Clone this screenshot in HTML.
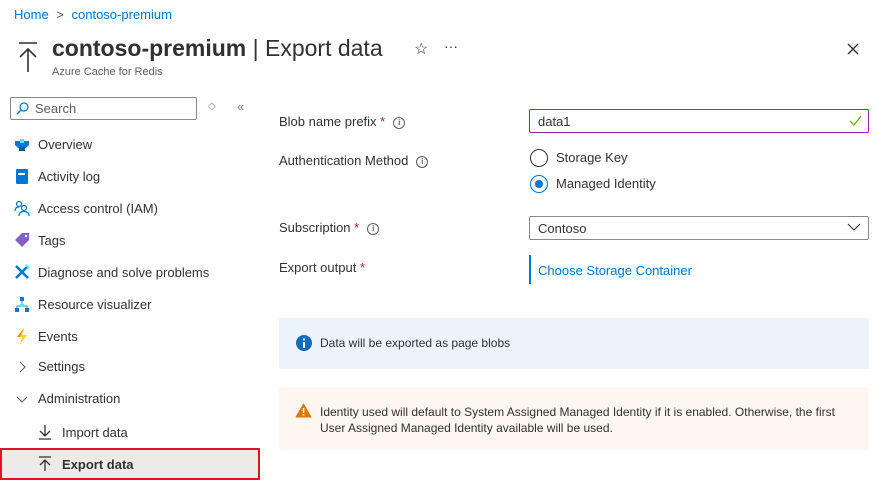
<!DOCTYPE html>
<html><head><meta charset="utf-8"><style>
*{margin:0;padding:0;box-sizing:border-box}
body{width:878px;height:487px;background:#fff;font-family:"Liberation Sans",sans-serif;color:#323130;position:relative;overflow:hidden;font-size:13px}
.a{position:absolute;white-space:nowrap}
.nav{position:absolute;left:38px;font-size:13px;line-height:16px}
.ic{position:absolute;left:14px;width:16px;height:16px}
.lbl{position:absolute;left:279px;font-size:13px;line-height:16px}
.req{color:#a4262c}
.info{display:inline-block;width:12px;height:12px;border:1px solid #605e5c;border-radius:50%;font-size:8px;line-height:10px;text-align:center;color:#605e5c;vertical-align:middle;margin-left:8px;font-weight:bold}
</style></head><body>
<div class="a" style="left:14px;top:7px;color:#0078d4;font-size:13px">Home <span style="color:#605e5c;margin:0 4px">&gt;</span> contoso-premium</div>
<svg class="a" style="left:17px;top:41px" width="22" height="32" viewBox="0 0 22 32"><path d="M2 2H20M11 8V31M3 16L11 8L19 16" stroke="#323130" stroke-width="1.6" fill="none"/></svg>
<div class="a" style="left:52px;top:34px;font-size:23px;line-height:28px;color:#323130"><b>contoso-premium</b> | Export data</div>
<div class="a" style="left:414px;top:39px;font-size:16px;color:#323130">☆</div>
<div class="a" style="left:444px;top:38px;font-size:14px;color:#323130">···</div>
<svg class="a" style="left:847px;top:43px" width="12" height="12"><path d="M1 1L11 11M11 1L1 11" stroke="#323130" stroke-width="1.3"/></svg>
<div class="a" style="left:52px;top:66px;font-size:11px;color:#605e5c">Azure Cache for Redis</div>
<div class="a" style="left:10px;top:97px;width:187px;height:23px;border:1px solid #8a8886;border-radius:2px"></div>
<svg class="a" style="left:16px;top:102px" width="13" height="13"><circle cx="8" cy="5" r="4" stroke="#0078d4" fill="none" stroke-width="1.2"/><path d="M5 8L1 12" stroke="#0078d4" stroke-width="1.3"/></svg>
<div class="a" style="left:35px;top:101px;color:#605e5c;font-size:13px">Search</div>
<div class="a" style="left:208px;top:101px;color:#8a8886;font-size:10px">◇</div>
<div class="a" style="left:237px;top:99px;color:#8a8886;font-size:13px">«</div>

<svg class="ic" style="top:137px" viewBox="0 0 16 16"><path d="M1 4h14v4l-3 3H4L1 8z" fill="#0078d4"/><rect x="5" y="10" width="6" height="4" fill="#005ba1"/><rect x="6" y="2" width="4" height="4" fill="#50e6ff"/></svg>
<div class="nav" style="top:137px">Overview</div>
<svg class="ic" style="top:168px" viewBox="0 0 16 16"><rect x="2" y="1" width="12" height="15" rx="1" fill="#0078d4"/><rect x="4" y="5" width="7" height="2" fill="#fff"/></svg>
<div class="nav" style="top:169px">Activity log</div>
<svg class="ic" style="top:200px" viewBox="0 0 16 16" fill="none" stroke="#0078d4" stroke-width="1.2"><circle cx="5" cy="4" r="2.5"/><path d="M1 11c0-3 2-4 4-4"/><circle cx="10" cy="8" r="2.5"/><path d="M5 16c0-3 2-4.5 5-4.5s5 1.5 5 4.5"/></svg>
<div class="nav" style="top:201px">Access control (IAM)</div>
<svg class="ic" style="top:232px" viewBox="0 0 16 16"><path d="M8 1h7v7l-7 7-7-7z" fill="#8661c5"/><circle cx="12" cy="4" r="1.2" fill="#fff"/></svg>
<div class="nav" style="top:233px">Tags</div>
<svg class="ic" style="top:264px" viewBox="0 0 16 16"><path d="M2 2L14 14M14 2L2 14" stroke="#0078d4" stroke-width="2.6"/><path d="M12 1l3 3" stroke="#50e6ff" stroke-width="2"/></svg>
<div class="nav" style="top:265px">Diagnose and solve problems</div>
<svg class="ic" style="top:296px" viewBox="0 0 16 16"><path d="M8 4V9M3 13V10H13V13" stroke="#7a7574" fill="none"/><rect x="6" y="1" width="4" height="4" fill="#0078d4"/><rect x="1" y="12" width="4" height="4" fill="#0078d4"/><rect x="11" y="12" width="4" height="4" fill="#0078d4"/><rect x="6" y="8" width="4" height="3" fill="#50e6ff"/></svg>
<div class="nav" style="top:297px">Resource visualizer</div>
<svg class="ic" style="top:328px" viewBox="0 0 16 16"><path d="M10 0L3 9h5l-2 7 7-9H8z" fill="#fcd116"/><path d="M10 0L3 9h3z" fill="#ff8c00"/></svg>
<div class="nav" style="top:329px">Events</div>
<svg class="ic" style="top:359px" viewBox="0 0 16 16"><path d="M6 3l5 5-5 5" stroke="#605e5c" fill="none" stroke-width="1.1"/></svg>
<div class="nav" style="top:359px">Settings</div>
<svg class="ic" style="top:391px" viewBox="0 0 16 16"><path d="M3 6l5 5 5-5" stroke="#605e5c" fill="none" stroke-width="1.1"/></svg>
<div class="nav" style="top:391px">Administration</div>
<svg class="a" style="left:38px;top:424px" width="14" height="16"><path d="M7 1V12M2 7L7 12L12 7M1 15H13" stroke="#323130" stroke-width="1.3" fill="none"/></svg>
<div class="nav" style="top:425px;left:62px">Import data</div>
<div class="a" style="left:0;top:448px;width:260px;height:32px;background:#edebe9;border:2px solid #e81123"></div>
<svg class="a" style="left:38px;top:456px" width="14" height="16"><path d="M1 1H13M7 4V15M2 9L7 4L12 9" stroke="#323130" stroke-width="1.3" fill="none"/></svg>
<div class="nav" style="top:457px;left:62px;font-weight:bold">Export data</div>

<div class="lbl" style="top:114px">Blob name prefix <span class="req">*</span><span class="info">i</span></div>
<div class="a" style="left:529px;top:109px;width:340px;height:24px;border:1px solid #8a2da5;border-radius:2px;padding:4px 8px;font-size:13px">data1</div>
<svg class="a" style="left:849px;top:115px" width="13" height="11"><path d="M1 6L5 10L12 1" stroke="#6bb700" stroke-width="1.3" fill="none"/></svg>
<div class="lbl" style="top:153px">Authentication Method<span class="info">i</span></div>
<div class="a" style="left:530px;top:149px;width:18px;height:18px;border:1px solid #323130;border-radius:50%"></div>
<div class="a" style="left:556px;top:150px;font-size:13px">Storage Key</div>
<div class="a" style="left:530px;top:175px;width:18px;height:18px;border:1px solid #0078d4;border-radius:50%"></div>
<div class="a" style="left:535px;top:180px;width:8px;height:8px;background:#0078d4;border-radius:50%"></div>
<div class="a" style="left:556px;top:176px;font-size:13px">Managed Identity</div>
<div class="lbl" style="top:220px">Subscription <span class="req">*</span><span class="info">i</span></div>
<div class="a" style="left:529px;top:216px;width:340px;height:24px;border:1px solid #8a8886;border-radius:2px;padding:4px 8px;font-size:13px">Contoso</div>
<svg class="a" style="left:847px;top:223px" width="14" height="9"><path d="M1 1L7 7L13 1" stroke="#323130" stroke-width="1.1" fill="none"/></svg>
<div class="lbl" style="top:260px">Export output <span class="req">*</span></div>
<div class="a" style="left:529px;top:255px;width:2px;height:29px;background:#0078d4"></div>
<div class="a" style="left:538px;top:263px;color:#0078d4;font-size:13px">Choose Storage Container</div>

<div class="a" style="left:279px;top:318px;width:590px;height:51px;background:#ebf3fc;border-radius:2px"></div>
<svg class="a" style="left:296px;top:335px" width="16" height="16"><circle cx="8" cy="8" r="8" fill="#0f6cbd"/><rect x="7" y="7" width="2" height="6" fill="#fff"/><circle cx="8" cy="4.5" r="1.2" fill="#fff"/></svg>
<div class="a" style="left:320px;top:336px;font-size:12px">Data will be exported as page blobs</div>
<div class="a" style="left:279px;top:387px;width:590px;height:63px;background:#fdf6f1;border-radius:2px"></div>
<svg class="a" style="left:295px;top:403px" width="17" height="15"><path d="M8.5 1L16 14H1z" fill="#da7b0f" stroke="#da7b0f" stroke-linejoin="round"/><rect x="7.8" y="5" width="1.5" height="5" fill="#fff"/><rect x="7.8" y="11" width="1.5" height="1.5" fill="#fff"/></svg>
<div class="a" style="left:320px;top:404px;font-size:12px;line-height:16px;white-space:normal;width:540px">Identity used will default to System Assigned Managed Identity if it is enabled. Otherwise, the first User Assigned Managed Identity available will be used.</div>
</body></html>
